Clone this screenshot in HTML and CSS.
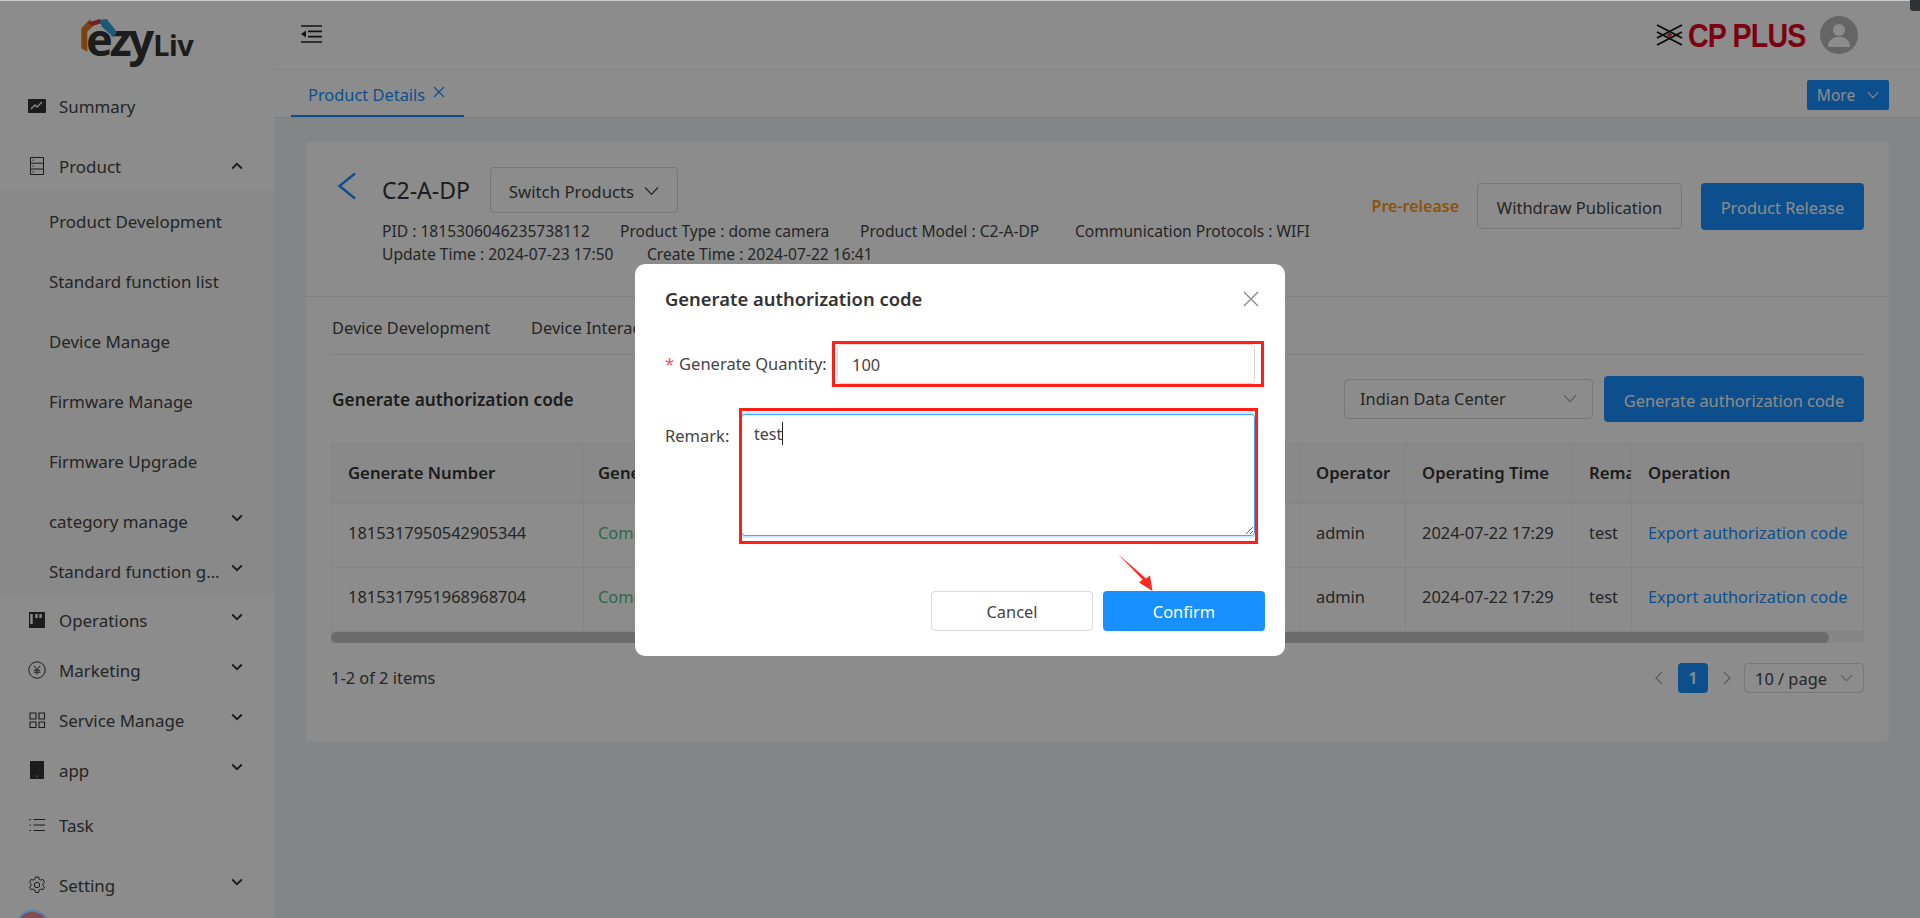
FILE: index.html
```html
<!DOCTYPE html>
<html lang="en">
<head>
  <meta charset="UTF-8" />
  <title>ezyLiv - Product Details</title>
  <link rel="stylesheet" href="styles.css">
</head>
<body>
  <svg class="sprite" width="0" height="0">
    <symbol id="down" viewBox="0 0 12 8"><path d="M1.2 1.5 6 6.2l4.8-4.7" fill="none" stroke="currentColor" stroke-width="1.9"/></symbol>
    <symbol id="up" viewBox="0 0 12 8"><path d="M1.2 6.5 6 1.8l4.8 4.7" fill="none" stroke="currentColor" stroke-width="1.9"/></symbol>
    <symbol id="thin-down" viewBox="0 0 14 9"><path d="M1 1.2 7 7.6l6-6.4" fill="none" stroke="currentColor" stroke-width="1.2"/></symbol>
  </svg>

  <div class="app">
    <aside class="sidebar">
      <div class="logo">
        <svg class="logo-mark" viewBox="0 0 38 36" width="38" height="36">
          <path d="M1.300 10.300 10 1.300 13.300 8 7.300 13.700v20l-6-3.400z" fill="#e07a26"/>
          <path d="M7.300 4.700 20 1l3.300 3.700L12.300 8z" fill="#d83a3a"/>
          <path d="M20 2l6.700-1 10 12.700-2.700 5.600L21.700 8.700z" fill="#2fa6d6"/>
        </svg>
        <span class="logo-ezy">ezy</span><span class="logo-liv">Liv</span>
      </div>

      <nav class="menu">
        <a class="item item-summary">
          <svg class="ico" viewBox="0 0 18 14"><rect width="18" height="14" rx="1" fill="#333"/><path d="M3 10l4-4 2 2 5-5" fill="none" stroke="#fff" stroke-width="1.3"/></svg>
          <span>Summary</span>
        </a>
        <a class="item item-product">
          <svg class="ico" viewBox="0 0 18 18"><path d="M2.500.5h13v17h-13zM2.500 6.200h13M2.500 12h13" fill="none" stroke="#333" stroke-width="1"/><path d="M4.500 3.200h1.400M4.500 9h1.400M4.500 14.800h1.400" stroke="#333" stroke-width="1"/></svg>
          <span>Product</span>
          <svg class="arrow"><use href="#up"/></svg>
        </a>
        <div class="submenu">
          <a class="sub">Product Development</a>
          <a class="sub">Standard function list</a>
          <a class="sub">Device Manage</a>
          <a class="sub">Firmware Manage</a>
          <a class="sub">Firmware Upgrade</a>
          <a class="sub">category manage<svg class="arrow"><use href="#down"/></svg></a>
          <a class="sub sub-short"><span class="clip">Standard function group</span><svg class="arrow"><use href="#down"/></svg></a>
        </div>
        <a class="item item-short">
          <svg class="ico" viewBox="0 0 18 18"><rect x="1" y="1" width="16" height="16" fill="#333"/><path d="M3.500 3v10M8.500 3v4M12.500 3v4" stroke="#fff" stroke-width="2.400"/></svg>
          <span>Operations</span>
          <svg class="arrow"><use href="#down"/></svg>
        </a>
        <a class="item item-short">
          <svg class="ico" viewBox="0 0 18 18"><circle cx="9" cy="9" r="8.200" fill="none" stroke="#333" stroke-width="1"/><path d="M6 4.800 9 8.600l3-3.800M5.800 9.200h6.400M5.800 11.200h6.400M9 8.600v5" fill="none" stroke="#333" stroke-width="1"/></svg>
          <span>Marketing</span>
          <svg class="arrow"><use href="#down"/></svg>
        </a>
        <a class="item item-short">
          <svg class="ico" viewBox="0 0 18 18"><path d="M2 2h6v6H2zM11 2h5.500v6H11zM2 11h6v5.500H2zM11 11h5.500v5.500H11z" fill="none" stroke="#333" stroke-width="1.100"/></svg>
          <span>Service Manage</span>
          <svg class="arrow"><use href="#down"/></svg>
        </a>
        <a class="item item-short">
          <svg class="ico" viewBox="0 0 18 18"><rect x="2" width="14" height="18" rx="1" fill="#333"/><rect x="8.500" y="14.600" width="1.200" height="1" fill="#fff"/></svg>
          <span>app</span>
          <svg class="arrow"><use href="#down"/></svg>
        </a>
        <a class="item">
          <svg class="ico" viewBox="0 0 18 18"><path d="M5.500 3.500H17M5.500 9H17M5.500 14.500H17M1.500 3.500h1.500M1.500 9h1.500M1.500 14.500h1.500" stroke="#333" stroke-width="1.100"/></svg>
          <span>Task</span>
        </a>
        <a class="item">
          <svg class="ico" viewBox="0 0 18 18"><path d="M7.400 1h3.200l.5 2.200 1.600.9 2.200-.7 1.600 2.800-1.600 1.500v1.800l1.600 1.500-1.600 2.800-2.200-.7-1.600.9-.5 2.500H7.400l-.5-2.500-1.600-.9-2.200.7-1.600-2.800 1.600-1.500V7.700L1.500 6.200l1.600-2.800 2.200.7 1.600-.9z" fill="none" stroke="#333" stroke-width="1"/><circle cx="9" cy="9" r="2.700" fill="none" stroke="#333" stroke-width="1"/></svg>
          <span>Setting</span>
          <svg class="arrow"><use href="#down"/></svg>
        </a>
      </nav>
    </aside>

    <div class="main">
      <header class="topbar">
        <svg class="toggle" viewBox="0 0 21 18" width="21" height="18"><path d="M0 1h21M7 6.300h14M7 11.600h14M0 17h21" stroke="#222" stroke-width="1.700"/><path d="M0 9l5-3.500v7z" fill="#222"/></svg>
        <div class="brand">
          <svg viewBox="0 0 27 22" width="27" height="22"><path d="M1 1l25 13M26 1 1 14M1 8l25 13M26 8 1 21" stroke="#111" stroke-width="1.800"/><path d="M13.500 8.800l3 2.200-3 2.200-3-2.200z" fill="#e2273a"/></svg>
          <span class="brand-name">CP PLUS</span>
        </div>
        <svg class="avatar" viewBox="0 0 38 38" width="38" height="38"><circle cx="19" cy="19" r="19" fill="#b9b9b9"/><circle cx="19" cy="14" r="6" fill="#fff"/><path d="M8 31c0-6 4-9 8-10h6c4 1 8 4 8 10z" fill="#fff"/></svg>
      </header>

      <div class="tabbar">
        <div class="tab-active">Product Details
          <svg viewBox="0 0 12 12" width="12" height="12"><path d="M1 1l10 10M11 1 1 11" stroke="currentColor" stroke-width="1.100"/></svg>
        </div>
        <button class="btn-more">More<svg viewBox="0 0 14 9" width="12" height="8"><use href="#thin-down"/></svg></button>
      </div>

      <main class="content">
        <section class="card">
          <div class="card-head">
            <svg class="back" viewBox="0 0 20 28" width="20" height="28"><path d="M18 1.500 2.500 14 18 26.500" fill="none" stroke="#1890ff" stroke-width="2.400"/></svg>
            <div class="info">
              <div class="title-row">
                <h1>C2-A-DP</h1>
                <button class="btn-switch">Switch Products<svg viewBox="0 0 14 9" width="15" height="10"><use href="#thin-down"/></svg></button>
              </div>
              <div class="meta">
                <span class="m-pid">PID : 1815306046235738112</span>
                <span class="m-type">Product Type : dome camera</span>
                <span class="m-model">Product Model : C2-A-DP</span>
                <span>Communication Protocols : WIFI</span>
              </div>
              <div class="meta">
                <span class="m-update">Update Time : 2024-07-23 17:50</span>
                <span>Create Time : 2024-07-22 16:41</span>
              </div>
            </div>
            <div class="actions">
              <span class="status">Pre-release</span>
              <button class="btn btn-default">Withdraw Publication</button>
              <button class="btn btn-primary btn-release">Product Release</button>
            </div>
          </div>

          <div class="card-body">
            <div class="subtabs">
              <span>Device Development</span>
              <span>Device Interaction</span>
            </div>
            <div class="section-row">
              <h2>Generate authorization code</h2>
              <div class="select">Indian Data Center<svg viewBox="0 0 14 9" width="14" height="9"><use href="#thin-down"/></svg></div>
              <button class="btn btn-primary btn-generate">Generate authorization code</button>
            </div>

            <table class="codes">
              <colgroup>
                <col class="c-number"><col class="c-status"><col class="c-operator"><col class="c-time"><col class="c-remark"><col class="c-op">
              </colgroup>
              <thead>
                <tr><th>Generate Number</th><th>Generate Status</th><th>Operator</th><th>Operating Time</th><th>Remark</th><th class="fixed">Operation</th></tr>
              </thead>
              <tbody>
                <tr><td>1815317950542905344</td><td class="done">Completed</td><td>admin</td><td>2024-07-22 17:29</td><td>test</td><td class="fixed"><a>Export authorization code</a></td></tr>
                <tr><td>1815317951968968704</td><td class="done">Completed</td><td>admin</td><td>2024-07-22 17:29</td><td>test</td><td class="fixed"><a>Export authorization code</a></td></tr>
              </tbody>
            </table>
            <div class="hscroll"><div class="hscroll-thumb"></div></div>

            <div class="pager">
              <span class="total">1-2 of 2 items</span>
              <svg class="page-arrow" viewBox="0 0 9 14" width="9" height="14"><path d="M8 1 2 7l6 6" fill="none" stroke="currentColor" stroke-width="1.300"/></svg>
              <span class="page-num">1</span>
              <svg class="page-arrow" viewBox="0 0 9 14" width="9" height="14"><path d="M1 1l6 6-6 6" fill="none" stroke="currentColor" stroke-width="1.300"/></svg>
              <div class="page-size">10 / page<svg viewBox="0 0 14 9" width="13" height="8"><use href="#thin-down"/></svg></div>
            </div>
          </div>
        </section>
      </main>
    </div>
  </div>

  <div class="overlay">
    <div class="modal">
      <div class="modal-title">Generate authorization code
        <svg viewBox="0 0 16 16" width="16" height="16"><path d="M1 1l14 14M15 1 1 15" stroke="#888" stroke-width="1.300"/></svg>
      </div>
      <div class="field field-qty">
        <label><i>*</i>Generate Quantity:</label>
        <input type="text" value="100" readonly />
      </div>
      <div class="field field-remark">
        <label>Remark:</label>
        <div class="area-wrap">
          <textarea readonly>test</textarea>
          <span class="caret"></span>
        </div>
      </div>
      <div class="modal-foot">
        <button class="btn btn-cancel">Cancel</button>
        <button class="btn btn-confirm">Confirm</button>
      </div>
      <div class="mark mark-qty"></div>
      <div class="mark mark-remark"></div>
      <svg class="mark-arrow" viewBox="0 0 36 38" width="36" height="38"><path d="M0 0 24.500 25.500 21 28.500 34.500 37 32 21.500 28 24.500z" fill="#ff2a20"/></svg>
    </div>
  </div>

  <div class="float-ball"></div>
  <div class="corner-widget"></div>
</body>
</html>
```

FILE: styles.css
```css
* { box-sizing: border-box; }
html, body { margin: 0; height: 100%; overflow: hidden; }
body { font-family: "Noto Sans", "Open Sans", sans-serif; font-size: 16.4px; color: #444; background: #f0f2f5; }
h1, h2 { margin: 0; font-weight: normal; }
button { font-family: inherit; font-size: inherit; cursor: pointer; }
.sprite { position: absolute; }

.app { display: flex; height: 100vh; }

/* sidebar */
.sidebar { width: 274px; flex: none; background: #fff; font-size: 16.9px; }
.logo { position: relative; height: 76px; padding: 17px 0 0 86px; color: #333; white-space: nowrap; }
.logo-mark { position: absolute; left: 80px; top: 18px; }
.logo-ezy { font: bold 45px/44px "Noto Sans", sans-serif; letter-spacing: -3px; }
.logo-liv { font: bold 29px/44px "Noto Sans", sans-serif; margin-left: 2px; letter-spacing: -.5px; }

.item, .sub { display: flex; align-items: center; position: relative; white-space: nowrap; }
.item { height: 60px; padding-left: 28px; }
.item span { padding-top: 1px; }
.item-summary { height: 60px; }
.item-product { height: 54px; padding-top: 6px; }
.item-short { height: 50px; }
.ico { width: 18px; height: 18px; margin-right: 13px; flex: none; }
.arrow { position: absolute; right: 31px; top: 50%; width: 12px; height: 8px; margin-top: -7px; color: #333; }
.item-product .arrow { margin-top: -1px; }
.submenu { background: #fafafa; height: 405px; padding-top: 1px; }
.sub { height: 60px; padding: 0 0 0 49px; }
.sub-short { height: 40px; }
.clip { width: 172px; overflow: hidden; text-overflow: ellipsis; }

/* top */
.main { flex: 1; min-width: 0; display: flex; flex-direction: column; }
.topbar { height: 70px; flex: none; display: flex; align-items: center; background: #fff; border-bottom: 1px solid #f0f0f0; padding: 0 62px 0 27px; }
.toggle { margin-bottom: 2px; }
.brand { margin-left: auto; display: flex; align-items: center; gap: 5px; }
.brand-name { font: bold 34px/40px "Liberation Sans", sans-serif; color: #e0001e; width: 119px; white-space: nowrap; letter-spacing: -1px; transform: scaleX(.84); transform-origin: left center; }
.avatar { margin-left: 13px; }

.tabbar { height: 48px; flex: none; display: flex; background: #fff; border-bottom: 1px solid #e8e8e8; padding: 0 31px 0 17px; }
.tab-active { width: 173px; height: 47px; padding: 13px 0 0 17px; color: #1890ff; border-bottom: 2px solid #1890ff; line-height: 24px; white-space: nowrap; }
.tab-active svg { margin-left: 4px; vertical-align: 3px; }
.btn-more { margin: 10px 0 0 auto; width: 82px; height: 30px; display: flex; align-items: center; justify-content: center; gap: 12px; border: 0; border-radius: 2px; background: #1890ff; color: #fff; padding: 0; font-size: 15.5px; }

/* card */
.content { flex: 1; padding: 24px 31px 0 32px; }
.card { height: 599px; background: #fff; border-radius: 4px; }
.card-head { height: 155px; display: flex; padding: 25px 25px 0 31px; border-bottom: 1px solid #e8e8e8; }
.back { flex: none; margin: 5px 25px 0 0; }
.info { flex: none; }
.title-row { display: flex; align-items: center; height: 46px; gap: 20px; margin-bottom: 7px; }
.title-row h1 { font-size: 23px; width: 88px; color: #333; white-space: nowrap; }
.btn-switch { width: 188px; height: 46px; display: flex; align-items: center; justify-content: center; gap: 10px; padding: 2px 0 0; background: #fff; border: 1px solid #d9d9d9; border-radius: 4px; color: #444; font-size: 16.8px; }
.meta { display: flex; height: 23px; line-height: 23px; font-size: 15.6px; white-space: nowrap; }
.m-pid { width: 238px; }
.m-type { width: 240px; }
.m-model { width: 215px; }
.m-update { width: 265px; }
.actions { margin-left: auto; margin-top: 16px; display: flex; align-items: flex-start; }
.status { color: #fa9a14; font-size: 16px; font-weight: 600; line-height: 47px; margin-right: 18px; }
.btn { border-radius: 4px; border: 1px solid transparent; padding: 2px 0 0; }
.btn-default { width: 205px; height: 46px; background: #fff; border-color: #d9d9d9; color: #444; font-size: 16.5px; }
.btn-primary { background: #1890ff; color: #fff; }
.btn-release { width: 163px; height: 47px; margin-left: 19px; }

.card-body { padding: 0 25px; }
.subtabs { height: 58px; padding: 17px 0 0 1px; display: flex; gap: 41px; border-bottom: 1px solid #e8e8e8; line-height: 28px; }
.section-row { display: flex; align-items: center; margin-top: 21px; height: 46px; }
.section-row h2 { font-size: 17.3px; font-weight: 600; color: #333; margin-left: 1px; }
.select { margin-left: auto; width: 249px; height: 40px; display: flex; align-items: center; justify-content: space-between; padding: 0 15px 1px; border: 1px solid #d9d9d9; border-radius: 4px; }
.select svg { color: #aaa; }
.btn-generate { width: 260px; height: 46px; margin-left: 11px; }

.codes { margin-top: 21px; width: 1533px; table-layout: fixed; border-collapse: collapse; border: 1px solid #f0f0f0; }
.c-number { width: 252px; }
.c-operator { width: 106px; }
.c-time { width: 167px; }
.c-remark { width: 59px; }
.c-op { width: 232px; }
.codes th, .codes td { border: 1px solid #f0f0f0; padding: 0 0 0 16px; text-align: left; overflow: hidden; white-space: nowrap; }
.codes th:nth-child(2), .codes td:nth-child(2) { padding-left: 14px; }
.codes th { height: 60px; padding-bottom: 2px; background: #fafafa; font-size: 16.7px; font-weight: 600; color: #333; }
.codes td { height: 64px; padding-bottom: 6px; }
.codes .fixed { position: relative; box-shadow: -5px 0 6px -3px rgba(0,0,0,.18); background: #fafafa; }
.codes td.fixed { background: #fff; }
.done { color: #4cc08a; }
.codes a { color: #1890ff; }
.hscroll { height: 11px; background: #f5f5f5; }
.hscroll-thumb { width: 1498px; height: 11px; border-radius: 6px; background: #c4c4c4; }

.pager { display: flex; align-items: center; margin-top: 20px; height: 30px; }
.total { margin-right: auto; padding-bottom: 2px; }
.page-arrow { color: #aaa; }
.page-num { width: 30px; height: 30px; margin: 0 15px; background: #1890ff; color: #fff; border-radius: 4px; text-align: center; line-height: 30px; font-weight: 600; }
.page-size { width: 120px; height: 30px; margin-left: 12px; display: flex; align-items: center; justify-content: space-between; padding: 0 10px; border: 1px solid #d9d9d9; border-radius: 4px; }
.page-size svg { color: #aaa; }

/* modal */
.overlay { position: fixed; inset: 0; display: flex; align-items: center; justify-content: center; background: rgba(0,0,0,.45); border-top: 1px solid #c8c8c8; }
.modal { position: relative; width: 650px; height: 392px; padding: 22px 20px 0 30px; background: #fff; border-radius: 10px; }
.modal-title { display: flex; justify-content: space-between; align-items: center; height: 26px; padding-right: 6px; font-size: 18.4px; font-weight: 600; color: #333; }
.field { display: flex; gap: 10px; }
.field label { white-space: nowrap; font-size: 16.5px; }
.field label i { color: #ff4d4f; font-style: normal; margin-right: 5px; }
.field-qty { align-items: center; margin-top: 32px; }
.field-qty label { width: 162px; }
.field-qty input { width: 418px; height: 40px; padding: 2px 14px 0; border: 1px solid #d9d9d9; border-radius: 4px; font: inherit; color: #444; outline: 0; }
.field-remark { margin-top: 30px; }
.field-remark label { width: 66px; padding-top: 10px; }
.area-wrap { position: relative; }
.field-remark textarea { display: block; width: 514px; height: 122px; padding: 8px 12px; border: 1px solid #40a9ff; border-radius: 4px; box-shadow: 0 0 0 2px rgba(24,144,255,.2); font: 16px "Noto Sans", sans-serif; color: #444; outline: 0; resize: both; }
.caret { position: absolute; left: 41px; top: 8px; width: 1px; height: 23px; background: #222; }
.modal-foot { display: flex; justify-content: flex-end; gap: 10px; margin-top: 55px; }
.btn-cancel, .btn-confirm { width: 162px; height: 40px; }
.btn-cancel { background: #fff; border-color: #d9d9d9; color: #444; }
.btn-confirm { background: #1890ff; color: #fff; }

/* red annotations drawn on the screenshot */
.mark { position: absolute; border: 3px solid #ff1f14; }
.mark-qty { left: 197px; top: 77px; width: 432px; height: 46px; }
.mark-remark { left: 104px; top: 144px; width: 519px; height: 136px; }
.mark-arrow { position: absolute; left: 483px; top: 290px; }

.float-ball { position: fixed; left: 15px; top: 910px; width: 35px; height: 35px; border-radius: 50%; background: #8a4a4a; border: 2px solid #4a86b8; }
.corner-widget { position: fixed; right: 0; top: 0; width: 10px; height: 11px; background: #2f3338; border-radius: 0 0 0 3px; }
```
